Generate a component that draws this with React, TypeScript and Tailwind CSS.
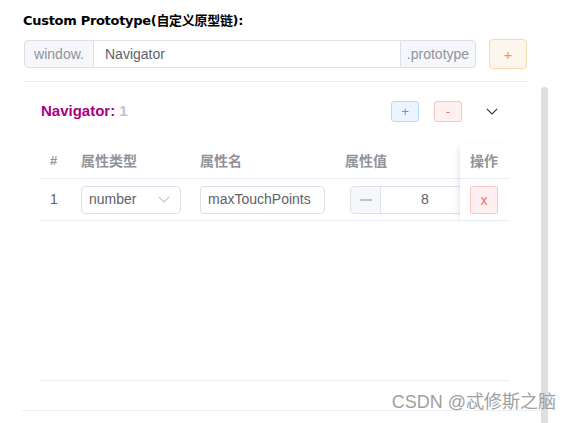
import React from "react";

const sans = "font-['Liberation_Sans','Noto_Sans_CJK_SC',sans-serif]";

const ChevronDown: React.FC<{ className?: string }> = ({ className }) => (
  <svg viewBox="0 0 12 7" className={className} fill="none">
    <path d="M0.8 0.8 L6 6 L11.2 0.8" stroke="currentColor" strokeWidth="1.1" />
  </svg>
);

const App: React.FC = () => {
  return (
    <div className={`relative w-[566px] h-[423px] bg-white overflow-hidden ${sans}`}>
      <div className="pl-[23px] pt-[12px] text-[13px] leading-[18px] font-bold text-black font-['DejaVu_Sans','Noto_Sans_CJK_SC',sans-serif] tracking-[-0.3px]">
        Custom Prototype(自定义原型链):
      </div>

      {/* prototype input */}
      <div className="flex items-center mt-[9px] ml-[24px]">
        <div className="flex w-[452px] h-[28px] text-[14px]">
          <div className="flex items-center justify-center w-[70px] bg-[#f5f7fa] border border-[#dcdfe6] rounded-l-[4px] text-[#909399]">
            window.
          </div>
          <div className="flex-1 flex items-center px-[11px] border-y border-[#dcdfe6] text-[#606266]">
            Navigator
          </div>
          <div className="flex items-center justify-center w-[76px] bg-[#f5f7fa] border border-[#dcdfe6] rounded-r-[4px] text-[#909399]">
            .prototype
          </div>
        </div>
        <button className="ml-[13px] w-[38px] h-[30px] rounded-[4px] bg-[#fdf6ec] border border-[#f5dab1] text-[#e6a23c] text-[15px] leading-none">
          +
        </button>
      </div>

      {/* panel */}
      <div className="flex mt-[12px] ml-[23px]">
        <div className="w-[505px] h-[329px] border-t border-[#ebeef5]">
          <div className="flex items-center h-[58px] pl-[18px] pr-[30px]">
            <div className="text-[15px] font-bold text-[#a8007f]">
              Navigator: <span className="text-[#c0c4cc]">1</span>
            </div>
            <div className="flex-1" />
            <button className="w-[28px] h-[21px] rounded-[3px] bg-[#ecf5ff] border border-[#b3d8ff] text-[#409eff] text-[13px] leading-none">
              +
            </button>
            <button className="ml-[15px] w-[28px] h-[21px] rounded-[3px] bg-[#fef0f0] border border-[#fbc4c4] text-[#f56c6c] text-[13px] leading-none">
              -
            </button>
            <ChevronDown className="ml-[24px] w-[12px] h-[7px] text-[#303133]" />
          </div>

          {/* table */}
          <div className="relative ml-[17px] w-[470px] mt-[4px]">
            <div className="flex h-[35px] items-center text-[14px] font-bold text-[#909399] border-b border-[#ebeef5]">
              <div className="w-[30px] pl-[10px] text-[13px]">#</div>
              <div className="w-[120px] pl-[11px]">属性类型</div>
              <div className="w-[145px] pl-[10px]">属性名</div>
              <div className="w-[125px] pl-[10px]">属性值</div>
            </div>
            <div className="flex h-[42px] items-center text-[14px] text-[#606266] border-b border-[#ebeef5]">
              <div className="w-[30px] pl-[10px]">1</div>
              <div className="w-[120px] pl-[11px]">
                <div className="flex items-center justify-between w-[100px] h-[28px] px-[7px] border border-[#dcdfe6] rounded-[4px]">
                  <span>number</span>
                  <ChevronDown className="w-[12px] h-[7px] mr-[3px] text-[#c0c4cc]" />
                </div>
              </div>
              <div className="w-[145px] pl-[10px]">
                <div className="flex items-center w-[125px] h-[28px] px-[7px] border border-[#dcdfe6] rounded-[4px]">
                  maxTouchPoints
                </div>
              </div>
              <div className="w-[125px] pl-[15px] overflow-hidden">
                <div className="flex w-[150px] h-[28px] border border-[#dcdfe6] rounded-[4px]">
                  <div className="flex items-center justify-center w-[30px] bg-[#f5f7fa] border-r border-[#dcdfe6] rounded-l-[4px]">
                    <div className="w-[12px] h-[2px] bg-[#c0c4cc]" />
                  </div>
                  <div className="flex-1 flex items-center justify-center">8</div>
                  <div className="w-[30px]" />
                </div>
              </div>
            </div>
            <div className="h-[160px] border-b border-[#ebeef5]" />

            {/* fixed right column */}
            <div className="absolute top-0 right-0 w-[50px] bg-white shadow-[-4px_0_6px_-3px_rgba(0,0,0,0.12)]">
              <div className="flex h-[35px] items-center pl-[10px] text-[14px] font-bold text-[#909399] border-b border-[#ebeef5]">
                操作
              </div>
              <div className="flex h-[42px] items-center pl-[10px] border-b border-[#ebeef5]">
                <button className="w-[28px] h-[28px] rounded-[3px] bg-[#fef0f0] border border-[#fbc4c4] text-[#f56c6c] text-[14px] leading-none">
                  x
                </button>
              </div>
            </div>
          </div>
        </div>
        <div className="ml-[13px] mt-[6px] w-[7px] h-[340px] rounded-full bg-[#dddee0]" />
      </div>
      <div className="ml-[22px] w-[518px] h-px bg-[#ebeef5] -mt-[17px]" />

      <div className="absolute right-[10px] bottom-[11px] text-[18px] leading-[20px] text-[#a0a0a0] font-['Liberation_Sans','Noto_Sans_CJK_SC',sans-serif]">
        CSDN @忒修斯之脑
      </div>
    </div>
  );
};

export default App;
